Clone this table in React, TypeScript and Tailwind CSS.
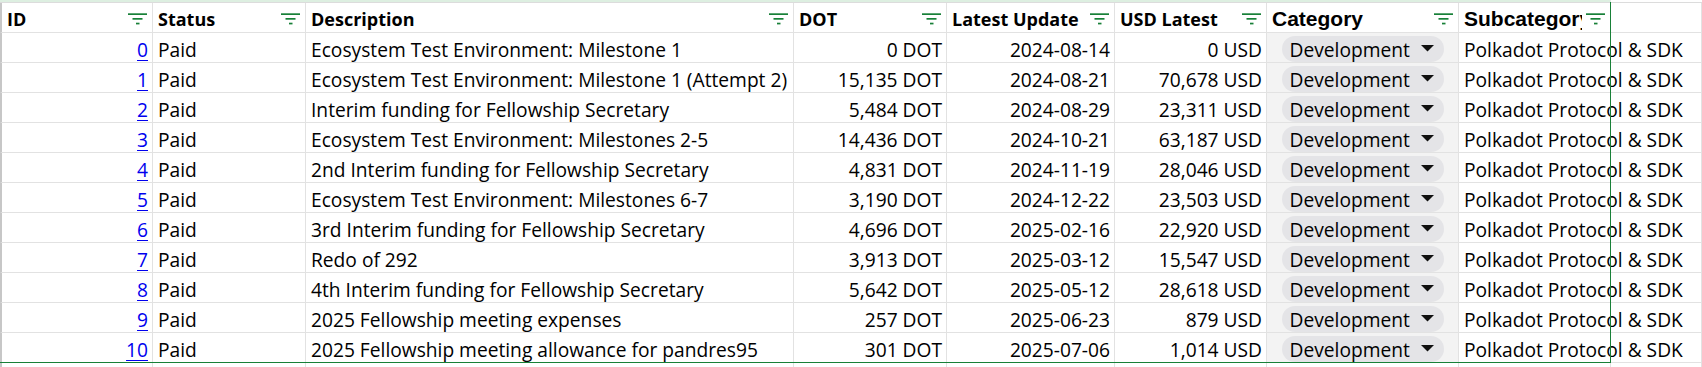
import React from "react";

type Row = {
  id: number;
  desc: string;
  dot: string;
  date: string;
  usd: string;
};

const rows: Row[] = [
  { id: 0, desc: "Ecosystem Test Environment: Milestone 1", dot: "0 DOT", date: "2024-08-14", usd: "0 USD" },
  { id: 1, desc: "Ecosystem Test Environment: Milestone 1 (Attempt 2)", dot: "15,135 DOT", date: "2024-08-21", usd: "70,678 USD" },
  { id: 2, desc: "Interim funding for Fellowship Secretary", dot: "5,484 DOT", date: "2024-08-29", usd: "23,311 USD" },
  { id: 3, desc: "Ecosystem Test Environment: Milestones 2-5", dot: "14,436 DOT", date: "2024-10-21", usd: "63,187 USD" },
  { id: 4, desc: "2nd Interim funding for Fellowship Secretary", dot: "4,831 DOT", date: "2024-11-19", usd: "28,046 USD" },
  { id: 5, desc: "Ecosystem Test Environment: Milestones 6-7", dot: "3,190 DOT", date: "2024-12-22", usd: "23,503 USD" },
  { id: 6, desc: "3rd Interim funding for Fellowship Secretary", dot: "4,696 DOT", date: "2025-02-16", usd: "22,920 USD" },
  { id: 7, desc: "Redo of 292", dot: "3,913 DOT", date: "2025-03-12", usd: "15,547 USD" },
  { id: 8, desc: "4th Interim funding for Fellowship Secretary", dot: "5,642 DOT", date: "2025-05-12", usd: "28,618 USD" },
  { id: 9, desc: "2025 Fellowship meeting expenses", dot: "257 DOT", date: "2025-06-23", usd: "879 USD" },
  { id: 10, desc: "2025 Fellowship meeting allowance for pandres95", dot: "301 DOT", date: "2025-07-06", usd: "1,014 USD" },
];

const GRID =
  "grid grid-cols-[153px_153px_488px_153px_168px_152px_192px_152px_1fr]";

function FilterIcon() {
  return (
    <svg width="19" height="12" viewBox="0 0 19 12" className="shrink-0 self-start mt-[10px] ml-[4px] mr-[5px]">
      <rect x="0" y="0.3" width="19" height="1.7" fill="#188038" />
      <rect x="4.5" y="5" width="10" height="1.7" fill="#188038" />
      <rect x="8" y="9.7" width="3.5" height="1.7" fill="#188038" />
    </svg>
  );
}

function Head({ label, arial, first }: { label: string; arial?: boolean; first?: boolean }) {
  return (
    <div
      className={
        "flex h-[30px] border-r border-b border-[#e2e2e2] bg-white pl-[5px] " +
        (first ? "border-l-2 border-l-[#c7c7c7] pl-[4px] " : "")
      }
    >
      <div
        className={
          "flex-1 min-w-0 overflow-hidden whitespace-nowrap self-end text-black font-bold " +
          (arial
            ? "font-['Liberation_Sans',Arial,sans-serif] text-[21px] leading-[26px]"
            : "font-['Open_Sans',sans-serif] text-[18px] leading-[24px] pb-[1px]")
        }
      >
        {label}
      </div>
      {label !== "" && <FilterIcon />}
    </div>
  );
}

function Cell({
  children,
  right,
  first,
  className,
}: {
  children?: React.ReactNode;
  right?: boolean;
  first?: boolean;
  className?: string;
}) {
  return (
    <div
      className={
        "flex items-end h-[30px] border-r border-b border-[#e2e2e2] whitespace-nowrap text-[19.2px] leading-[24px] text-black " +
        (right ? "justify-end pr-[4px] " : "pl-[5px] ") +
        (first ? "border-l-2 border-l-[#c7c7c7] " : "") +
        (className ?? "")
      }
    >
      {children}
    </div>
  );
}

function Chip() {
  return (
    <div className="flex items-end justify-center h-[30px] border-r border-b border-[#e2e2e2] bg-[#f3f3f3]">
      <div className="flex items-center w-[162px] h-[26px] rounded-full bg-[#e4e4e7] pl-[8px] pr-[10px]">
        <span className="pt-[2px] text-[19.2px] leading-[24px] text-black">Development</span>
        <svg width="13" height="7" viewBox="0 0 13 7" className="ml-auto mb-[2px]">
          <polygon points="0,0 13,0 6.5,6.5" fill="#111" />
        </svg>
      </div>
    </div>
  );
}

export default function App() {
  return (
    <div className="relative w-[1702px] h-[367px] overflow-hidden bg-white font-['Open_Sans',sans-serif]">
      <div className="flex h-[2px]">
        <div className="w-[1611px] bg-[#ddefe1]" />
        <div className="flex-1 bg-white" />
      </div>
      <div className={GRID + " border-t border-[#dcdcdc]"}>
        <Head label="ID" first />
        <Head label="Status" />
        <Head label="Description" />
        <Head label="DOT" />
        <Head label="Latest Update" />
        <Head label="USD Latest" />
        <Head label="Category" arial />
        <Head label="Subcategory" arial />
        <div className="h-[30px] border-r border-b border-[#e2e2e2] bg-white" />
      </div>
      {rows.map((r) => (
        <div key={r.id} className={GRID}>
          <Cell right first>
            <a href="#" className="text-[#0000ee] underline decoration-1 underline-offset-[3px]">
              {r.id}
            </a>
          </Cell>
          <Cell>Paid</Cell>
          <Cell>{r.desc}</Cell>
          <Cell right>{r.dot}</Cell>
          <Cell right>{r.date}</Cell>
          <Cell right>{r.usd}</Cell>
          <Chip />
          <Cell className="relative z-10 overflow-visible">Polkadot Protocol &amp; SDK</Cell>
          <Cell />
        </div>
      ))}
      <div className={GRID}>
        <Cell first />
        <Cell />
        <Cell />
        <Cell />
        <Cell />
        <Cell />
        <Cell />
        <Cell />
        <Cell />
      </div>
      <div className="pointer-events-none absolute left-0 top-[2px] z-20 w-[1611px] h-[361px] border-r border-b border-[#188038]" />
    </div>
  );
}
